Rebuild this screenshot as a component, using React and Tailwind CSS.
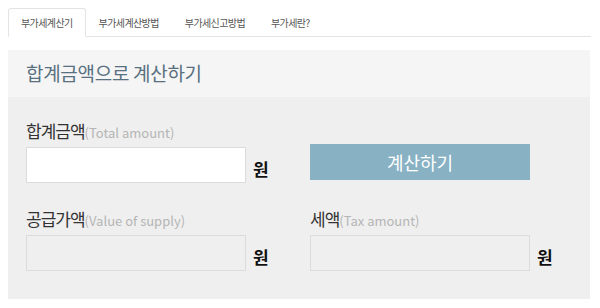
import React from 'react';

const FONT = "font-['Noto_Sans_CJK_KR','Noto_Sans',sans-serif]";

const TABS = ['부가세계산기', '부가세계산방법', '부가세신고방법', '부가세란?'];

function Field({ label, sub, readOnly, className = '' }) {
  return (
    <div className={className}>
      <p className="text-[17px] leading-[20px] text-[#333] tracking-[-1px]">
        {label}
        <span className="text-[13px] text-[#b5b5b5] tracking-normal">({sub})</span>
      </p>
      <div className="flex items-end mt-[4px]">
        <input
          readOnly={readOnly}
          className={`w-[220px] h-[36px] border border-[#dcdcdc] outline-none px-2 ${readOnly ? 'bg-[#efefef]' : 'bg-white'}`}
        />
        <span className="ml-[7px] mb-[2px] text-[17px] font-bold text-[#111]">원</span>
      </div>
    </div>
  );
}

export default function App() {
  return (
    <div className={`w-[600px] h-[308px] bg-white pt-2 px-2 ${FONT}`}>
      {/* Tabs */}
      <div className="flex border-b border-[#e3e3e3] mr-[1px]">
        {TABS.map((t, i) => (
          <div
            key={t}
            className={`h-[29px] px-3 flex items-center text-[10px] tracking-[-0.6px] text-[#555] -mb-px ${
              i === 0 ? 'border border-[#e3e3e3] border-b-white bg-white rounded-t-[3px]' : 'border border-transparent'
            }`}
          >
            {t}
          </div>
        ))}
      </div>

      {/* Panel */}
      <div className="mt-[13px] w-[582px] bg-[#efefef]">
        <div className="h-[47px] bg-[#f5f5f5] flex items-center pl-[18px]">
          <h2 className="text-[19px] text-[#587080] tracking-[-0.3px]">합계금액으로 계산하기</h2>
        </div>
        <div className="pl-[18px] pt-[24px] pb-[28px]">
          <div className="flex">
            <Field label="합계금액" sub="Total amount" className="w-[284px]" />
            <button className="mt-[23px] w-[220px] h-[36px] bg-[#88b2c4] text-white text-[18px]">
              계산하기
            </button>
          </div>
          <div className="flex mt-[26px]">
            <Field label="공급가액" sub="Value of supply" readOnly className="w-[284px]" />
            <Field label="세액" sub="Tax amount" readOnly />
          </div>
        </div>
      </div>
    </div>
  );
}
